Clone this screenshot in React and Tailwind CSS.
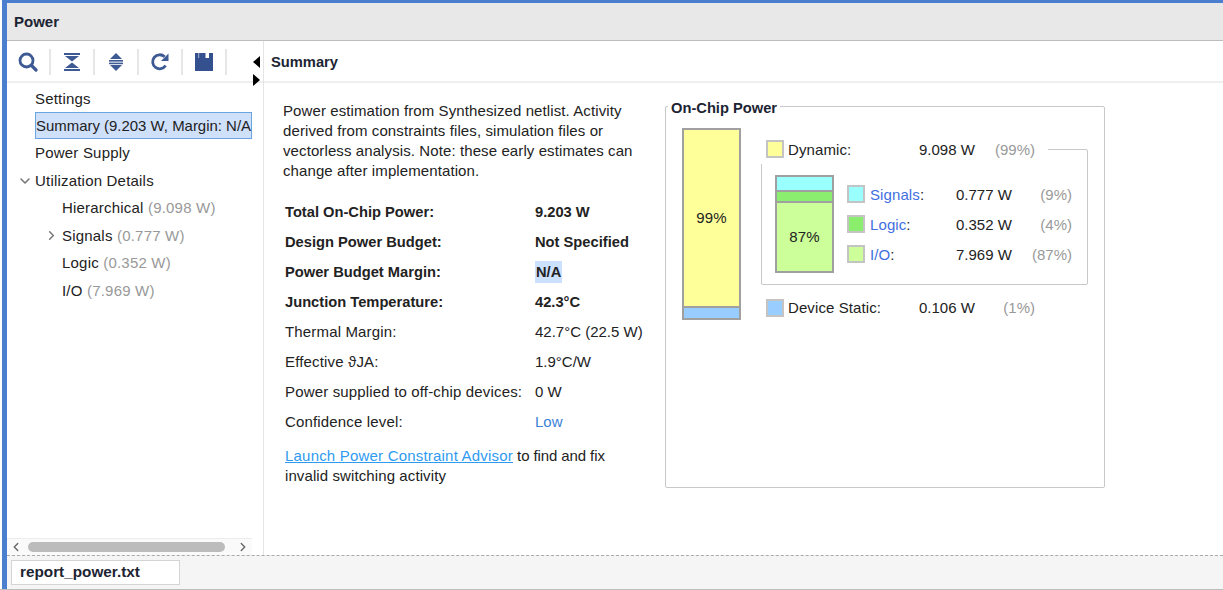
import { ChevronLeft, ChevronRight, ChevronDown } from 'lucide-react'

const tree = [
  { label: 'Hierarchical', value: '(9.098 W)' },
  { label: 'Signals', value: '(0.777 W)', expandable: true },
  { label: 'Logic', value: '(0.352 W)' },
  { label: 'I/O', value: '(7.969 W)' },
]

const stats = [
  { label: 'Total On-Chip Power:', value: '9.203 W', bold: true },
  { label: 'Design Power Budget:', value: 'Not Specified', bold: true },
  { label: 'Power Budget Margin:', value: 'N/A', bold: true, selected: true },
  { label: 'Junction Temperature:', value: '42.3°C', bold: true },
  { label: 'Thermal Margin:', value: '42.7°C (22.5 W)' },
  { label: 'Effective ϑJA:', value: '1.9°C/W' },
  { label: 'Power supplied to off-chip devices:', value: '0 W' },
  { label: 'Confidence level:', value: 'Low', link: true },
]

const dynamicRows = [
  { label: 'Signals', value: '0.777 W', pct: '(9%)', swatch: 'bg-[#99ffff]' },
  { label: 'Logic', value: '0.352 W', pct: '(4%)', swatch: 'bg-[#8cee6e] border-[#a8a8a8]' },
  { label: 'I/O', value: '7.969 W', pct: '(87%)', swatch: 'bg-[#ccff99]' },
]

function SearchIcon() {
  return (
    <svg width="20" height="20" viewBox="0 0 20 20" fill="none" stroke="#3d5a94">
      <circle cx="8.5" cy="8.5" r="6.5" strokeWidth="2.8" />
      <path d="M13.5 13.5l4.5 4.5" strokeWidth="3.2" strokeLinecap="round" />
    </svg>
  )
}

function CollapseIcon() {
  return (
    <svg width="16" height="18" viewBox="0 0 16 18" fill="#3d5a94">
      <rect x="0" y="0" width="16" height="2" />
      <path d="M1 3h14l-7 5.5z" />
      <path d="M8 9.5l7 5.5H1z" />
      <rect x="0" y="16" width="16" height="2" />
    </svg>
  )
}

function ExpandIcon() {
  return (
    <svg width="16" height="18" viewBox="0 0 16 18" fill="#3d5a94">
      <path d="M8 0l6 6H2z" />
      <rect x="1" y="7" width="14" height="1.6" />
      <rect x="1" y="9.6" width="14" height="1.6" />
      <path d="M2 12h12l-6 6z" />
    </svg>
  )
}

function RefreshIcon() {
  return (
    <svg width="20" height="20" viewBox="0 0 20 20" fill="none">
      <path d="M15.6 13.5A7 7 0 1 1 14.6 4.8" stroke="#3d5a94" strokeWidth="2.8" />
      <path d="M18.5 1.5v7.5h-7.5z" fill="#3d5a94" />
    </svg>
  )
}

function SaveIcon() {
  return (
    <svg width="18" height="18" viewBox="0 0 18 18">
      <path d="M0 0h18v18H0z" fill="#34508f" />
      <rect x="3" y="0" width="1.2" height="5" fill="#8fa0c4" />
      <rect x="10.5" y="0" width="3.5" height="5" fill="#ffffff" />
    </svg>
  )
}

function ToolButton({ children }) {
  return (
    <div className="flex items-center justify-center w-[44px] h-[26px] border-r-2 border-[#e6e6e6]">
      {children}
    </div>
  )
}

function Swatch({ className }) {
  return <div className={`w-[18px] h-[18px] border-2 border-[#c4c4c4] ${className}`} />
}

export default function App() {
  return (
    <div className="w-[1223px] h-[590px] bg-white overflow-hidden flex flex-col text-[15px] tracking-[0.1px] text-[#222] font-['Liberation_Sans',Arial,sans-serif]">
      <div className="h-[3px] bg-[#4a7fd0] ml-[2px]" />
      <div className="flex-1 flex min-h-0 pl-[2px]">
        <div className="w-[5px] bg-[#4a7fd0]" />
        <div className="flex-1 flex flex-col min-w-0">
          <div className="h-[38px] pt-[2px] bg-[#e8e8e8] border-b border-[#bdbdbd] flex items-center pl-[7px] font-bold tracking-normal text-[#1c2433]">
            Power
          </div>
          <div className="flex-1 flex min-h-0">
            {/* left tree */}
            <div className="relative w-[257px] border-r border-[#e4e4e4] flex flex-col">
              <div className="h-[42px] pt-[2px] border-b-2 border-[#efefef] flex items-center">
                <ToolButton><SearchIcon /></ToolButton>
                <ToolButton><CollapseIcon /></ToolButton>
                <ToolButton><ExpandIcon /></ToolButton>
                <ToolButton><RefreshIcon /></ToolButton>
                <ToolButton><SaveIcon /></ToolButton>
              </div>
              <div className="absolute left-[246px] top-[15px] w-0 h-0 border-y-[6px] border-y-transparent border-r-[7px] border-r-black" />
              <div className="absolute left-[246px] top-[33px] w-0 h-0 border-y-[6px] border-y-transparent border-l-[7px] border-l-black" />
              <div className="flex-1 pt-[2px] tracking-[0.2px]">
                <div className="h-[27px] pt-[2px] flex items-center pl-[28px]">Settings</div>
                <div className="h-[27px] pt-[1px] ml-[28px] w-[217px] flex items-center bg-[#cfe0fb] border border-[#6ba5e0] whitespace-nowrap text-[14.95px] tracking-normal">
                  Summary (9.203 W, Margin: N/A
                </div>
                <div className="h-[27px] mt-[1px] flex items-center pl-[28px]">Power Supply</div>
                <div className="h-[27px] pt-[1px] flex items-center pl-[10px]">
                  <ChevronDown size={16} strokeWidth={2.4} className="text-[#777] mr-[2px]" />
                  Utilization Details
                </div>
                {tree.map(item => (
                  <div key={item.label} className="h-[27.5px] pt-[1px] flex items-center pl-[55px] relative">
                    {item.expandable && <ChevronRight size={15} strokeWidth={2.4} className="absolute left-[37px] text-[#777]" />}
                    {item.label}&nbsp;<span className="text-[#999]">{item.value}</span>
                  </div>
                ))}
              </div>
              <div className="h-[17px] w-[245px] border-t border-[#ececec] flex items-center bg-[#fafafa]">
                <ChevronLeft size={14} strokeWidth={2.4} className="text-[#666] ml-[2px]" />
                <div className="ml-[5px] w-[197px] h-[10px] rounded-full bg-[#bcbcbc]" />
                <ChevronRight size={14} strokeWidth={2.4} className="text-[#666] ml-[11px]" />
              </div>
            </div>

            {/* summary */}
            <div className="flex-1 flex flex-col min-w-0">
              <div className="h-[42px] pt-[2px] border-b-2 border-[#efefef] flex items-center pl-[7px] font-bold text-[14.7px] tracking-normal text-[#1c2433]">
                Summary
              </div>
              <div className="flex-1 flex pl-[19px] pt-[18px]">
                <div className="w-[382px]">
                  <p className="w-[358px] leading-[20px]">
                    Power estimation from Synthesized netlist. Activity derived from constraints files, simulation files or vectorless analysis. Note: these early estimates can change after implementation.
                  </p>
                  <div className="mt-[16px] pl-[2px]">
                    {stats.map(row => (
                      <div key={row.label} className={`h-[30px] flex items-center ${row.bold ? 'font-bold text-[14.7px] tracking-normal' : 'tracking-[0.16px]'}`}>
                        <div className="w-[250px] whitespace-nowrap">{row.label}</div>
                        <div className={`whitespace-nowrap tracking-normal ${row.link ? 'text-[#3b82d6]' : ''} ${row.selected ? 'bg-[#cce0ff] px-[1px]' : ''}`}>{row.value}</div>
                      </div>
                    ))}
                  </div>
                  <p className="mt-[9px] pl-[2px] leading-[20px]">
                    <span className="text-[#2e9bf0] underline tracking-[0.2px]">Launch Power Constraint Advisor</span>
                    <span className="tracking-[-0.1px]"> to find and fix</span>
                    <br />invalid switching activity
                  </p>
                </div>

                {/* on-chip power */}
                <div className="relative mt-[5px] w-[440px] h-[382px] border border-[#c8c8c8] rounded-[2px] flex items-start pt-[21px] pl-[16px]">
                  <div className="absolute left-[2px] -top-[7px] bg-white px-[3px] font-bold text-[14.7px] tracking-normal leading-[16px] text-[#1c2433]">On-Chip Power</div>
                  <div className="w-[59px] h-[192px] border-2 border-[#a0a0a0] flex flex-col">
                    <div className="flex-1 bg-[#ffff99] flex items-center justify-center">99%</div>
                    <div className="h-[10px] border-t-2 border-[#a0a0a0] bg-[#99ccff] box-content" />
                  </div>
                  <div className="ml-[20px] w-[327px]">
                    <div className="relative z-10 w-[287px] h-[36px] pl-[5px] pt-[12px] bg-white flex items-start">
                      <Swatch className="bg-[#ffff99]" />
                      <div className="ml-[4px] w-[131px] leading-[19px]">Dynamic:</div>
                      <div className="w-[60px] leading-[19px] tracking-normal">9.098 W</div>
                      <div className="w-[56px] text-right text-[#999] leading-[19px] tracking-normal">(99%)</div>
                    </div>
                    <div className="-mt-[15px] h-[136px] border border-[#c8c8c8] rounded-[2px] flex items-start pl-[13px] pt-[25px]">
                      <div className="w-[59px] h-[98px] border-2 border-[#a0a0a0] flex flex-col">
                        <div className="h-[13px] bg-[#99ffff] border-b-2 border-[#a0a0a0] box-content" />
                        <div className="h-[9px] bg-[#8cee6e] border-b-2 border-[#a0a0a0] box-content" />
                        <div className="flex-1 bg-[#ccff99] flex items-center justify-center">87%</div>
                      </div>
                      <div className="ml-[13px] pt-[10px] flex flex-col gap-[12px]">
                        {dynamicRows.map(row => (
                          <div key={row.label} className="flex items-start h-[18px]">
                            <Swatch className={row.swatch} />
                            <div className="ml-[5px] w-[86px] leading-[20px]"><span className="text-[#3f6fe0]">{row.label}</span>:</div>
                            <div className="w-[60px] leading-[20px] tracking-normal">{row.value}</div>
                            <div className="w-[56px] text-right text-[#999] leading-[20px] tracking-normal">{row.pct}</div>
                          </div>
                        ))}
                      </div>
                    </div>
                    <div className="mt-[14px] pl-[5px] flex items-start h-[18px]">
                      <Swatch className="bg-[#99ccff]" />
                      <div className="ml-[4px] w-[131px] leading-[18px]">Device Static:</div>
                      <div className="w-[60px] leading-[18px] tracking-normal">0.106 W</div>
                      <div className="w-[56px] text-right text-[#999] leading-[18px] tracking-normal">(1%)</div>
                    </div>
                  </div>
                </div>
              </div>
            </div>
          </div>
          <div className="h-[34px] border-t border-dashed border-[#aaa] bg-[#f5f5f5] pt-[4px] pl-[4px]">
            <div className="w-[169px] h-[25px] bg-white border border-[#d4d4d4] flex items-center pl-[8px] font-bold text-[15.3px] tracking-normal text-[#1c2433]">report_power.txt</div>
          </div>
        </div>
      </div>
      <div className="h-px bg-[#bdbdbd]" />
    </div>
  )
}
